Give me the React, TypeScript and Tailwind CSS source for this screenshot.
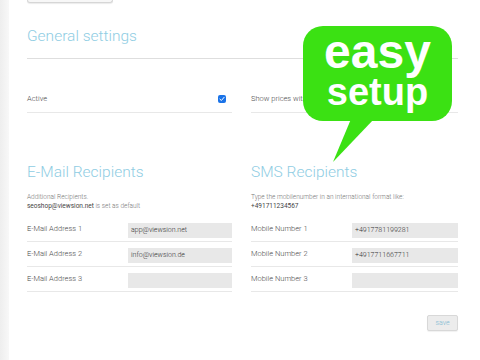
import React from "react";

const emailRows = [
  { label: "E-Mail Address 1", value: "app@viewsion.net" },
  { label: "E-Mail Address 2", value: "info@viewsion.de" },
  { label: "E-Mail Address 3", value: "" },
];

const smsRows = [
  { label: "Mobile Number 1", value: "+4917781199281" },
  { label: "Mobile Number 2", value: "+4917711667711" },
  { label: "Mobile Number 3", value: "" },
];

function FieldRow({ label, value }: { label: string; value: string }) {
  return (
    <div className="flex items-center border-b border-[#e8e8e8] pt-[6px] pb-[3px]">
      <div className="w-[101px] shrink-0 text-[7.5px] leading-[10px] font-light text-[#4a4a4a] -mt-[3px]">{label}</div>
      <div className="flex-1 h-[15px] bg-[#e8e8e8] px-[3px] text-[7px] leading-[15px] font-light text-[#333]">{value}</div>
    </div>
  );
}

function Checkbox() {
  return (
    <span className="flex items-center justify-center w-[8px] h-[8px] rounded-[2px] bg-[#1a73e8]">
      <svg viewBox="0 0 8 8" className="w-[6px] h-[6px]">
        <path d="M1.2 4.2 L3.2 6 L6.8 1.8" fill="none" stroke="white" strokeWidth="1.3" strokeLinecap="round" strokeLinejoin="round" />
      </svg>
    </span>
  );
}

function EasySetupBubble() {
  return (
    <div className="absolute left-[303px] top-[26px] w-[149px]">
      <div className="relative z-10 h-[95px] rounded-[20px] bg-[#3be113] pt-[6px] text-center font-['Liberation_Sans',Arial,sans-serif] font-bold text-white">
        <div className="text-[48px] leading-[40px]">easy</div>
        <div className="text-[38px] leading-[40px]">setup</div>
      </div>
      <svg className="absolute left-0 top-[93px]" width="149" height="44" viewBox="0 0 149 44">
        <polygon points="48,0 71,0 30,43" fill="#3be113" />
      </svg>
    </div>
  );
}

export default function App() {
  return (
    <div className="relative flex min-h-[360px] bg-white font-['Roboto',sans-serif] overflow-hidden">
      <div className="w-[9px] shrink-0 bg-gradient-to-r from-[#eeeeee] to-[#f8f8f8]" />

      <div className="flex-1 pl-[18px] pr-[22px]">
        <div className="w-[86px] h-[3px] border-x border-b border-[#d6d6d6] rounded-b-[3px] bg-[#f7f7f7] shadow-[0_1px_1px_rgba(0,0,0,0.08)]" />

        <h2 className="mt-[24px] text-[15.5px] leading-[18px] font-light text-[#8fcde3]">General settings</h2>
        <div className="mt-[13px] border-b border-[#dedede]" />

        <div className="grid grid-cols-[205px_1fr] gap-x-[19px] mt-[35px]">
          <div className="flex items-center justify-between border-b border-[#e8e8e8] pb-[8px] pr-[6px]">
            <span className="text-[7.5px] leading-[10px] font-light text-[#4a4a4a]">Active</span>
            <Checkbox />
          </div>
          <div className="flex items-center border-b border-[#e8e8e8] pb-[8px]">
            <span className="text-[7.5px] leading-[10px] font-light text-[#4a4a4a]">Show prices with tax</span>
          </div>
        </div>

        <div className="grid grid-cols-[205px_1fr] gap-x-[19px] mt-[50px]">
          <div>
            <h2 className="text-[15.5px] leading-[18px] font-light text-[#8fcde3]">E-Mail Recipients</h2>
            <div className="mt-[12px] text-[6.5px] leading-[9px] font-light text-[#777]">
              <div>Additional Recipients.</div>
              <div>
                <span className="font-normal text-[#444]">seoshop@viewsion.net</span> is set as default
              </div>
            </div>
            <div className="mt-[6px]">
              {emailRows.map((r) => (
                <FieldRow key={r.label} label={r.label} value={r.value} />
              ))}
            </div>
          </div>

          <div>
            <h2 className="text-[15.5px] leading-[18px] font-light text-[#8fcde3]">SMS Recipients</h2>
            <div className="mt-[12px] text-[6.5px] leading-[9px] font-light text-[#777]">
              <div>Type the mobilenumber in an international format like:</div>
              <div className="font-normal text-[#444]">+491711234567</div>
            </div>
            <div className="mt-[6px]">
              {smsRows.map((r) => (
                <FieldRow key={r.label} label={r.label} value={r.value} />
              ))}
            </div>
          </div>
        </div>

        <div className="flex justify-end mt-[23px]">
          <button className="w-[31px] h-[16px] rounded-[2px] border border-[#d8d8d8] bg-[#ececec] text-[7px] leading-[14px] font-light text-[#7fb9d2] shadow-[0_1px_1px_rgba(0,0,0,0.06)]">
            save
          </button>
        </div>
      </div>

      <EasySetupBubble />
    </div>
  );
}
